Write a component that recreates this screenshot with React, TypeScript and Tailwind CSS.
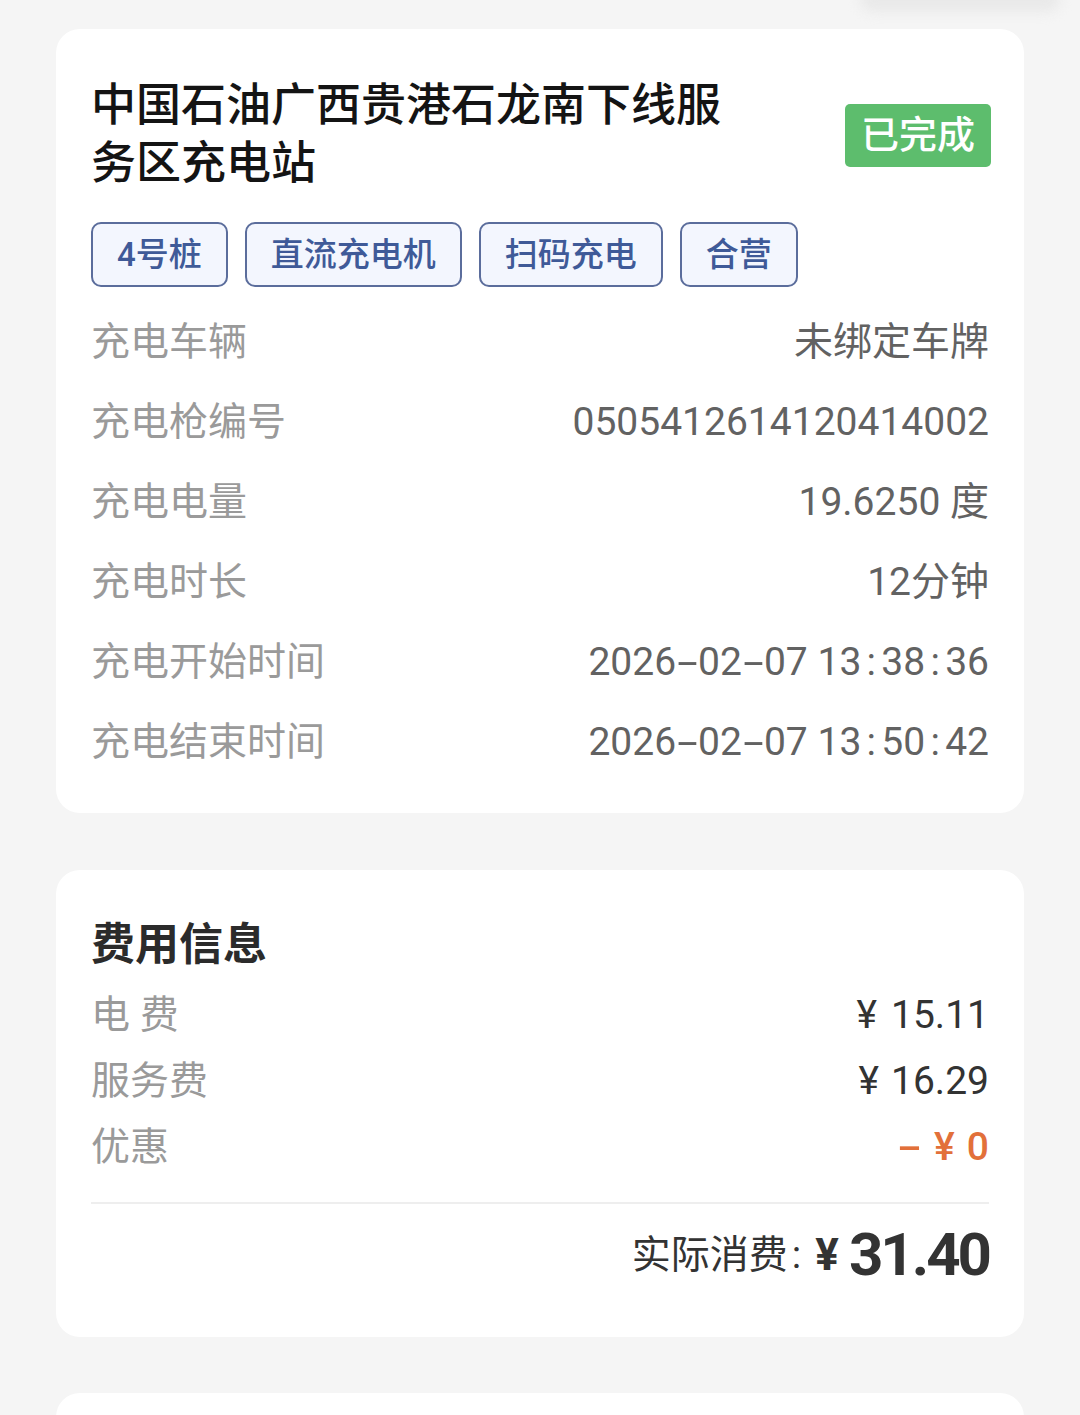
import React from "react";

const font = { fontFamily: '"Roboto","Noto Sans CJK SC",sans-serif' };

function Tab({ v }: { v: string }) {
  const parts: React.ReactNode[] = [];
  v.split("").forEach((ch, i) => {
    if (ch === "-") {
      parts.push(
        <span key={i} className="inline-block w-[22px] text-center">
          <span className="inline-block scale-x-[1.9]">-</span>
        </span>
      );
    } else if (ch === ":") {
      parts.push(
        <span key={i} className="inline-block w-[20px] text-center">
          :
        </span>
      );
    } else parts.push(<React.Fragment key={i}>{ch}</React.Fragment>);
  });
  return <>{parts}</>;
}

function Row({ label, value }: { label: string; value: string }) {
  return (
    <div className="flex h-[80px] items-center justify-between">
      <span className="text-[39px] text-[#9a9a9a]">{label}</span>
      <span className="text-[39px] text-[#626262]">
        <Tab v={value} />
      </span>
    </div>
  );
}

function FeeRow({ label, children }: { label: string; children: React.ReactNode }) {
  return (
    <div className="flex h-[66px] items-center justify-between">
      <span className="text-[39px] text-[#9a9a9a]">{label}</span>
      {children}
    </div>
  );
}

export default function App() {
  const tags = ["4号桩", "直流充电机", "扫码充电", "合营"];
  return (
    <div className="relative min-h-[1415px] w-[1080px] overflow-hidden bg-[#f5f5f5]" style={font}>
      <div className="absolute right-[20px] top-[-14px] h-[26px] w-[200px] rounded-full bg-[#e9e9e9] blur-[6px]" />
      <div className="pt-[29px]">
        <div className="relative mx-[56px] rounded-[24px] bg-white px-[35px] pb-[31px] pt-[48px]">
          <div className="flex items-center justify-between">
            <div className="w-[665px] text-[45px] font-medium leading-[58px] text-[#141414]">
              中国石油广西贵港石龙南下线服务区充电站
            </div>
            <div className="mr-[-2px] flex h-[63px] items-center rounded-[5px] bg-[#5dbd6d] px-[16px] text-[38px] font-medium text-white">
              已完成
            </div>
          </div>
          <div className="mt-[29px] flex gap-[17px]">
            {tags.map((t) => (
              <div
                key={t}
                className="flex h-[65px] items-center rounded-[10px] border-2 border-[#5b6d9c] bg-[#f3f6fe] px-[24px] text-[33px] font-medium text-[#3f5a98]"
              >
                {t}
              </div>
            ))}
          </div>
          <div className="mt-[15px]">
            <Row label="充电车辆" value="未绑定车牌" />
            <Row label="充电枪编号" value="0505412614120414002" />
            <Row label="充电电量" value="19.6250 度" />
            <Row label="充电时长" value="12分钟" />
            <Row label="充电开始时间" value="2026-02-07 13:38:36" />
            <Row label="充电结束时间" value="2026-02-07 13:50:42" />
          </div>
        </div>

        <div className="mx-[56px] mt-[57px] rounded-[24px] bg-white px-[35px] pb-[31px] pt-[47px]">
          <div className="text-[44px] font-bold leading-[56px] text-[#2b2b2b]">费用信息</div>
          <div className="mt-[9px]">
            <FeeRow label="电 费">
              <span className="text-[39px] text-[#333333]">
                ¥<span className="ml-[14px]">15.11</span>
              </span>
            </FeeRow>
            <FeeRow label="服务费">
              <span className="text-[39px] text-[#333333]">
                ¥<span className="ml-[12px]">16.29</span>
              </span>
            </FeeRow>
            <FeeRow label="优惠">
              <span className="flex items-center text-[39px] font-medium text-[#e2703a]">
                <span className="inline-block scale-x-[1.9]">-</span>
                <span className="ml-[18px]">¥</span>
                <span className="ml-[12px]">0</span>
              </span>
            </FeeRow>
          </div>
          <div className="mt-[22px] h-[2px] bg-[#eeeeee]" />
          <div className="flex h-[102px] items-center justify-end text-[#333333]">
            <span className="text-[39px]">实际消费</span>
            <span className="ml-[4px] text-[39px]">:</span>
            <span className="ml-[14px] text-[44px] font-bold">¥</span>
            <span className="ml-[10px] text-[60px] font-bold tracking-[-3px]">31.40</span>
          </div>
        </div>

        <div className="mx-[56px] mt-[56px] h-[60px] rounded-t-[24px] bg-white" />
      </div>
    </div>
  );
}
